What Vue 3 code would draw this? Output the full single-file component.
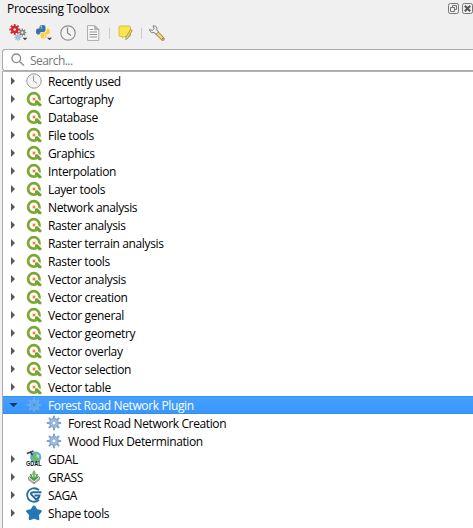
<script setup>
const names = ['Recently used', 'Cartography', 'Database', 'File tools', 'Graphics', 'Interpolation', 'Layer tools', 'Network analysis', 'Raster analysis', 'Raster terrain analysis', 'Raster tools', 'Vector analysis', 'Vector creation', 'Vector general', 'Vector geometry', 'Vector overlay', 'Vector selection', 'Vector table']
const rows = [
  ...names.map((name, i) => ({ name, icon: i ? 'qgis' : 'clock' })),
  { name: 'Forest Road Network Plugin', icon: 'gear', open: true },
  { name: 'Forest Road Network Creation', icon: 'gear', child: true },
  { name: 'Wood Flux Determination', icon: 'gear', child: true },
  { name: 'GDAL', icon: 'gdal' },
  { name: 'GRASS', icon: 'grass' },
  { name: 'SAGA', icon: 'saga' },
  { name: 'Shape tools', icon: 'star' },
]
const teeth = [0, 45, 90, 135, 180, 225, 270, 315]
</script>

<template>
  <div class="panel">
    <header class="title">
      <span class="title-text">Processing Toolbox</span>
      <svg class="win" width="11" height="11" viewBox="0 0 11 11">
        <rect x=".5" y=".5" width="10" height="10" rx="1.8" />
        <path d="M4.500 4V2.500h4v4H7M2.500 4.500h4v4h-4z" />
      </svg>
      <svg class="win" width="11" height="11" viewBox="0 0 11 11">
        <rect x=".5" y=".5" width="10" height="10" rx="1.8" />
        <path class="cross" d="M2.800 2.800l5.400 5.400M8.200 2.800L2.800 8.200" />
      </svg>
    </header>

    <div class="tools">
      <svg class="tool gears" width="18" height="18" viewBox="0 0 18 18">
        <g transform="translate(5.700 5.500)">
          <path v-for="a in teeth" :key="a" :transform="`rotate(${a})`" d="M0-2.500V-5.400" stroke="#d4282c" stroke-width="1.900" />
          <circle r="2.500" fill="#f3dcdc" stroke="#d4282c" stroke-width="2.400" />
        </g>
        <g transform="translate(13.300 8.500)">
          <path v-for="a in teeth" :key="a" :transform="`rotate(${a})`" d="M0-1.800V-4" stroke="#858585" stroke-width="1.300" />
          <circle r="1.900" fill="none" stroke="#858585" stroke-width="1.500" />
        </g>
        <g transform="translate(8.800 13.300)">
          <path v-for="a in teeth" :key="a" :transform="`rotate(${a})`" d="M0-1.500V-3.400" stroke="#9bb9dc" stroke-width="1.200" />
          <circle r="1.600" fill="#b8cfe9" stroke="#9bb9dc" stroke-width="1.200" />
        </g>
        <path d="M13.500 13.800h5L16 16.300z" fill="#444" />
      </svg>
      <svg class="tool python" width="18" height="18" viewBox="0 0 18 18">
        <path d="M4.500 4.500V3Q4.500 1 7.500 1T10.500 3V6Q10.500 8 8.500 8H6.500Q4.500 8 4.500 10.500H3Q1 10.500 1 7.500T3 4.500H7.500V4z" fill="#3572a5" />
        <path d="M11.500 4.500H12.800Q14.800 4.500 14.800 7.500T12.800 10.500H8.500V11H11.500V12.500Q11.500 14.500 8.500 14.500T5.500 12.500V10Q5.500 8.500 7.500 8.500H9.500Q11.500 8.500 11.500 6.500z" fill="#fdcf3f" />
        <circle cx="6.300" cy="2.700" r=".7" fill="#fff" />
        <circle cx="9.700" cy="12.800" r=".7" fill="#fff" />
        <path d="M12 13.800h5l-2.500 2.500z" fill="#444" />
      </svg>
      <svg class="tool clock" width="16" height="16" viewBox="0 0 16 16">
        <circle cx="8" cy="8" r="7.200" fill="#f4f4f4" stroke="#8f8f8f" stroke-width="1.200" />
        <path d="M7.500 2.500V8l3.500 2.600" fill="none" stroke="#858585" stroke-width="1.200" />
      </svg>
      <svg class="tool doc" width="13" height="16" viewBox="0 0 13 16">
        <path d="M.6.6h7.200l4 4v10.800H.6z" fill="#fafafa" stroke="#aaa" />
        <path d="M7.700.6v4.200h4.200z" fill="#bbb" stroke="#999" stroke-width=".7" />
        <path d="M2.500 4.500H6M2.500 7h7.500M2.500 9.500H10M2.500 12H10" stroke="#929292" />
      </svg>
      <i class="sep"></i>
      <svg class="tool note" width="16" height="16" viewBox="0 0 16 16">
        <path d="M2 1h9.500q1 0 1 1v8.500q0 1-1 1H6.500L4.500 13v-1.500H2q-1 0-1-1V2q0-1 1-1z" fill="#f9e64b" stroke="#dcbe3b" />
        <path d="M12.600 4.500l1.700 1-4.600 8-2 1 .2-2.300z" fill="#ead36d" stroke="#8e814f" stroke-width=".7" />
      </svg>
      <i class="sep second"></i>
      <svg class="tool wrench" width="17" height="17" viewBox="0 0 17 17">
        <path d="M7 7l6.800 6.800" stroke="#a58d3c" stroke-width="4" stroke-linecap="round" />
        <path d="M8 8l5.700 5.700" stroke="#f1d980" stroke-width="2.300" stroke-linecap="round" />
        <path d="M4 .8q3.300-.3 4 2.200L7.700 5l1.800 1.900L7 9.300 5.100 7.500Q2.500 8.700.8 6L.7 4.300l2.500 1.200 1.900-1.800z" fill="#eee" stroke="#777" stroke-width=".9" />
        <circle cx="13.700" cy="13.700" r=".8" fill="#766d4c" />
      </svg>
    </div>

    <div class="search">
      <svg width="14" height="14" viewBox="0 0 14 14"><circle cx="5.300" cy="5.300" r="4.300" /><path d="M8.500 8.500l4.500 4" /></svg>
      <span>Search...</span>
    </div>

    <div class="tree">
      <div v-for="row in rows" :key="row.name" class="row" :class="{ selected: row.open, child: row.child }">
        <svg class="arrow" width="8" height="8" viewBox="0 0 8 8">
          <path v-if="row.open" d="M-.5 2h8l-4 4z" fill="#11365c" />
          <path v-else-if="!row.child" d="M1 0v8l4-4z" fill="#595959" />
        </svg>
        <svg class="icon" width="16" height="16" viewBox="0 0 16 16">
          <template v-if="row.icon === 'clock'">
            <circle cx="8" cy="8" r="7.200" fill="#f5f5f5" stroke="#999" />
            <path d="M7.500 2.500V8l3.500 2.300" fill="none" stroke="#999" />
          </template>
          <template v-else-if="row.icon === 'qgis'">
            <circle cx="7.800" cy="7.900" r="5.700" fill="#fff" stroke="#7ca832" stroke-width="2.700" />
            <path d="M10.500 9.500l5 5" stroke="#fff" stroke-width="4.200" />
            <path d="M9 9.300h2.500l3.800 4v1.900h-2.500L9 11.300z" fill="#70a238" />
            <circle cx="7.900" cy="7.900" r="2.200" fill="#fbe3b5" />
            <circle cx="8" cy="8" r="1.200" fill="#ed7743" />
          </template>
          <g v-else-if="row.icon === 'gear'" transform="translate(8 8)" :stroke="row.open ? '#78aee3' : '#7da3cf'" :fill="row.open ? '#5ba4ec' : '#a3c1e3'">
            <path v-for="a in teeth" :key="a" :transform="`rotate(${a})`" d="M0-4V-7.200" :stroke-width="row.open ? 1.5 : 2" />
            <circle r="4.300" stroke-width="1.200" />
            <circle r="2.100" :fill="row.open ? '#3f98f5' : '#fff'" stroke-width=".9" />
          </g>
          <template v-else-if="row.icon === 'gdal'">
            <circle cx="9.700" cy="6.200" r="5.600" fill="#53b4ce" />
            <path d="M7.500 3l3-1 2 2-1 2 2 1v3H8.500l-2-3z" fill="#72b963" />
            <path d="M10.500 2.500l3 2-1 3-2-2z" fill="#b8dfb1" />
            <path d="M.8 2.500L7.500 0" stroke="#444" stroke-width="1.800" />
            <path d="M4.300 1l2.200 3" stroke="#333" stroke-width="1.400" />
            <text x="0" y="15.300" class="gdal-text" textLength="15.500" lengthAdjust="spacingAndGlyphs">GDAL</text>
          </template>
          <template v-else-if="row.icon === 'grass'">
            <path d="M8 4l6 5-6 5-6-5z" fill="#eee" stroke="#888" />
            <path d="M2 10.300l6 4.700 6-4.700" fill="none" stroke="#999" />
            <path d="M8 12V2M7.500 11L4.500 5M8.500 11l3-6M7.500 11L4 8M8.500 11L12 8" stroke="#43a243" stroke-width="1.300" />
            <path d="M8 .8L5.800 4.500h4.400z" fill="#78c56d" />
          </template>
          <template v-else-if="row.icon === 'saga'">
            <path d="M13 3.200Q10 .5 6 1.500 1.200 3.200 1.200 8T6 14.500Q10 15.500 13 12.800" fill="none" stroke="#246d9e" stroke-width="1.800" />
            <path d="M15.500 5.300H7.500Q4 5.500 5.200 7.500L10 12.500Q13 11.500 13.500 8.500H8.500" fill="none" stroke="#246d9e" stroke-width="1.900" />
          </template>
          <path v-else d="M8 1.800l2.200 3.500 4.300.9-2.900 3.400.4 4.200-4-1.600-4 1.600.4-4.200-2.900-3.400 4.300-.9z" fill="#2379b5" stroke="#2379b5" stroke-width="2.700" stroke-linejoin="round" />
        </svg>
        <span class="label">{{ row.name }}</span>
      </div>
    </div>
  </div>
</template>

<style>
body { margin: 0; background: #f0f0f0; }
</style>
<style scoped>
.panel { box-sizing: border-box; height: 528px; overflow: hidden; background: #f0f0f0; color: #000; font: 12px/18px "Open Sans", "Noto Sans", sans-serif; letter-spacing: -.37px; }
.title { display: flex; height: 18px; padding-left: 7px; box-sizing: border-box; }
.title-text { flex: 1; letter-spacing: -.34px; }
.win { margin: 3px 0 0 3px; fill: none; stroke: #777; flex: none; }
.win .cross { stroke: #555; stroke-width: 2; }
.tools { display: flex; height: 31px; align-items: center; box-sizing: border-box; padding: 0 0 1px 9px; }
.tool { flex: none; overflow: visible; }
.python { margin-left: 8px; }
.clock { margin-left: 7px; }
.doc { margin-left: 11px; }
.sep { width: 1px; height: 11px; margin: 0 8px 0 9px; background: #ccc; }
.sep.second { margin: 0 7px 0 7px; }
.search { display: flex; align-items: center; box-sizing: border-box; height: 22px; margin-left: 2px; padding-left: 8px; border: 1px solid #aaa; border-right: 0; border-radius: 3px 0 0 3px; background: #fff; color: #777; }
.search svg { fill: none; stroke: #888; stroke-width: 1.3; margin-right: 5px; }
.search span { padding-top: 2px; letter-spacing: -.55px; }
.tree { height: 457px; box-sizing: border-box; margin-left: 2px; border-left: 1px solid #aaa; border-top: 1px solid #b5b5b5; background: #fff; }
.row { display: flex; align-items: center; height: 18px; padding-left: 7px; box-sizing: border-box; }
.row.child { padding-left: 27px; }
.arrow { flex: none; margin-right: 8px; overflow: visible; }
.icon { flex: none; margin-right: 6px; overflow: visible; }
.label { padding-top: 2px; white-space: nowrap; }
.selected { color: #fff; background: linear-gradient(#459fff, #3997fc); border-top: 1px solid #3b91ef; border-bottom: 1px solid #388de9; }
.gdal-text { font: 900 7px "Liberation Sans", sans-serif; fill: #111; letter-spacing: 0; }
</style>
